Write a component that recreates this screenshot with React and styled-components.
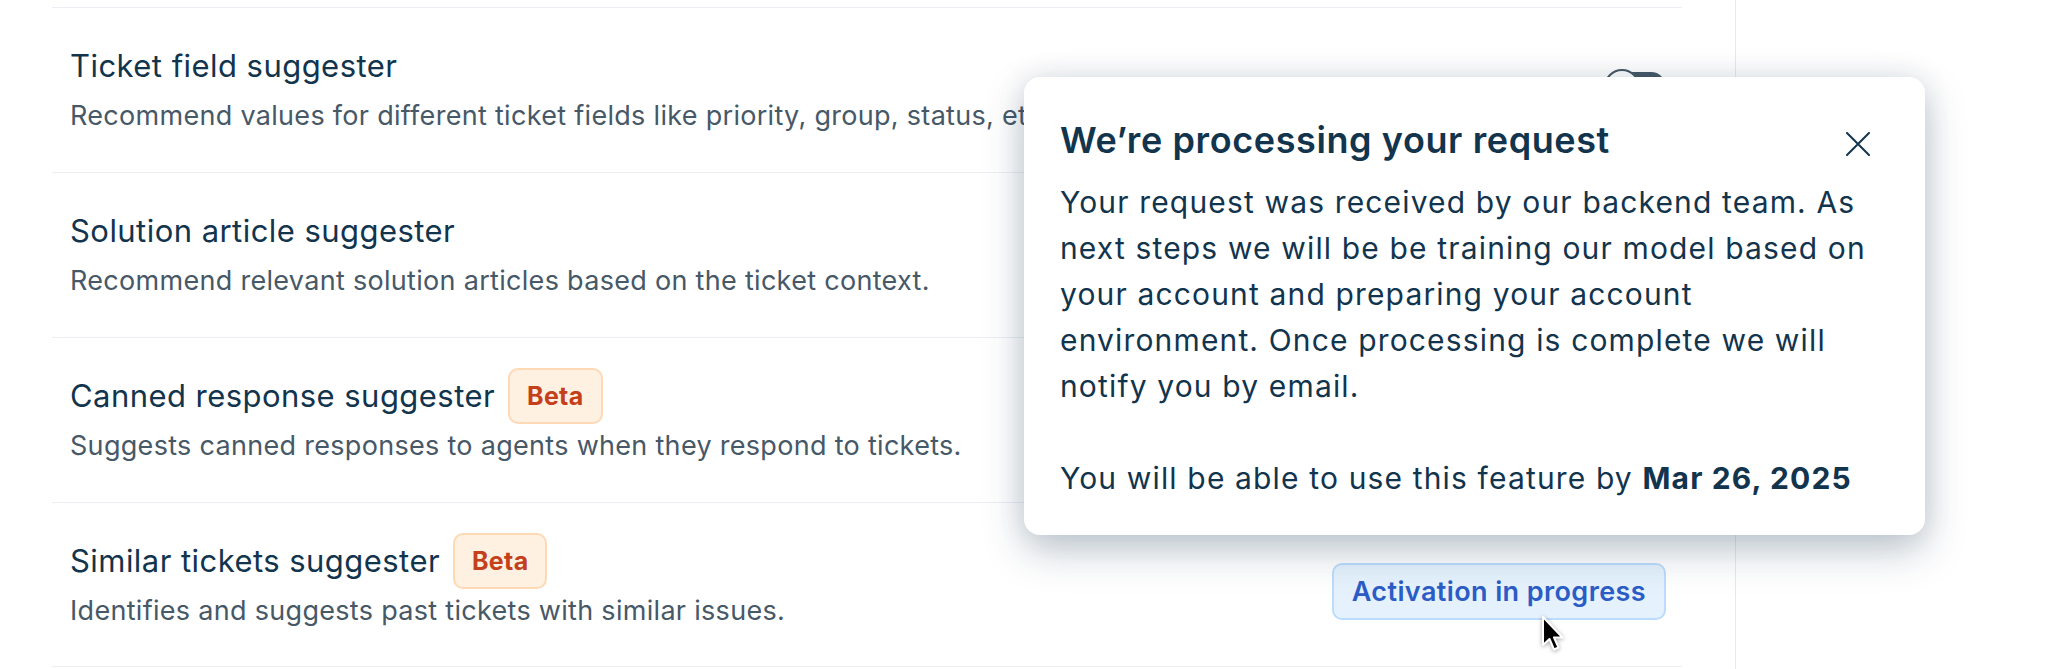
import React from "react";
import styled, { createGlobalStyle } from "styled-components";

const GlobalStyle = createGlobalStyle`
  html, body {
    margin: 0;
    padding: 0;
    background: #ffffff;
  }
  body {
    font-family: Inter, "Noto Sans", "Liberation Sans", sans-serif;
    color: #12344d;
    -webkit-font-smoothing: antialiased;
  }
  * {
    box-sizing: border-box;
  }
`;

const features = [
  {
    title: "Ticket field suggester",
    desc: "Recommend values for different ticket fields like priority, group, status, etc.",
    control: "toggle",
  },
  {
    title: "Solution article suggester",
    desc: "Recommend relevant solution articles based on the ticket context.",
    control: "toggle",
  },
  {
    title: "Canned response suggester",
    desc: "Suggests canned responses to agents when they respond to tickets.",
    beta: true,
    control: "toggle",
  },
  {
    title: "Similar tickets suggester",
    desc: "Identifies and suggests past tickets with similar issues.",
    beta: true,
    control: "progress",
  },
];

const App = () => {
  return (
    <>
      <GlobalStyle />
      <Page>
        <Main>
          <List>
            {features.map((f) => (
              <Row key={f.title}>
                <Info>
                  <TitleLine>
                    <Title>{f.title}</Title>
                    {f.beta && <Badge>Beta</Badge>}
                  </TitleLine>
                  <Desc>{f.desc}</Desc>
                </Info>
                {f.control === "toggle" ? (
                  <Toggle>
                    <Knob />
                  </Toggle>
                ) : (
                  <ProgressButton>Activation in progress</ProgressButton>
                )}
              </Row>
            ))}
          </List>
        </Main>
        <Side />

        <Popover>
          <PopoverHeader>
            <PopoverTitle>We’re processing your request</PopoverTitle>
            <CloseButton aria-label="Close">
              <svg width="24" height="24" viewBox="0 0 24 24" fill="none">
                <path
                  d="M1 1L23 23M23 1L1 23"
                  stroke="#12344d"
                  strokeWidth="2"
                  strokeLinecap="round"
                />
              </svg>
            </CloseButton>
          </PopoverHeader>
          <PopoverBody>
            Your request was received by our backend team. As next steps we
            will be be training our model based on your account and preparing
            your account environment. Once processing is complete we will
            notify you by email.
            <br />
            <br />
            You will be able to use this feature by <strong>Mar 26, 2025</strong>
          </PopoverBody>
        </Popover>

        <Cursor>
          <svg width="26" height="40" viewBox="0 0 26 40">
            <path
              d="M2 2 L2 30 L8.5 24 L13 34.5 L17.5 32.5 L13 22.5 L21.5 22.5 Z"
              fill="#000"
              stroke="#fff"
              strokeWidth="2"
              strokeLinejoin="round"
            />
          </svg>
        </Cursor>
      </Page>
    </>
  );
};

export default App;

const Page = styled.div`
  position: relative;
  display: flex;
  width: 2048px;
  height: 669px;
  overflow: hidden;
  background: #fff;
`;

const Main = styled.div`
  width: 1736px;
  padding: 7px 53px 0 52px;
  border-right: 1px solid #e6eaee;
`;

const Side = styled.div`
  flex: 1;
`;

const List = styled.div`
  display: flex;
  flex-direction: column;
`;

const Row = styled.div`
  display: flex;
  align-items: center;
  justify-content: space-between;
  height: 165px;
  padding: 0 16px 0 18px;
  border-top: 1px solid #ebeff3;

  &:last-child {
    border-bottom: 1px solid #ebeff3;
  }
`;

const Info = styled.div`
  display: flex;
  flex-direction: column;
  gap: 12px;
`;

const TitleLine = styled.div`
  display: flex;
  align-items: center;
  gap: 13px;
  height: 40px;
`;

const Title = styled.div`
  font-size: 31px;
  line-height: 40px;
  font-weight: 400;
  letter-spacing: 0.45px;
  color: #12344d;
  white-space: nowrap;
`;

const Badge = styled.span`
  display: inline-flex;
  align-items: center;
  justify-content: center;
  height: 56px;
  padding: 0 17px;
  border: 2px solid #fdd9b5;
  border-radius: 10px;
  background: #fef1e1;
  color: #c4401b;
  font-size: 25px;
  font-weight: 700;
  letter-spacing: 0.3px;
`;

const Desc = styled.div`
  font-size: 27px;
  line-height: 36px;
  letter-spacing: 0.3px;
  color: #475867;
  white-space: nowrap;
`;

const Toggle = styled.div`
  position: relative;
  width: 62px;
  height: 30px;
  margin-top: -6px;
  border-radius: 15px;
  background: #475867;
`;

const Knob = styled.div`
  position: absolute;
  left: 0;
  top: -3px;
  width: 36px;
  height: 36px;
  border-radius: 50%;
  background: #fff;
  border: 2px solid #475867;
`;

const ProgressButton = styled.button`
  height: 57px;
  margin-top: 14px;
  padding: 0 18px;
  border: 2px solid #bbdcfd;
  border-radius: 10px;
  background: #e5f2fd;
  color: #2c5cc5;
  font-family: inherit;
  font-size: 27px;
  font-weight: 600;
  letter-spacing: 0.4px;
  white-space: nowrap;
  cursor: pointer;
`;

const Popover = styled.div`
  position: absolute;
  left: 1024px;
  top: 77px;
  width: 901px;
  padding: 41px 36px 34px;
  border-radius: 16px;
  background: #fff;
  box-shadow: 0 16px 40px rgba(18, 52, 77, 0.26),
    0 0 28px rgba(18, 52, 77, 0.1);
`;

const PopoverHeader = styled.div`
  display: flex;
  align-items: flex-start;
  justify-content: space-between;
`;

const PopoverTitle = styled.div`
  font-size: 36px;
  line-height: 44px;
  font-weight: 600;
  letter-spacing: 0.6px;
  color: #12344d;
`;

const CloseButton = styled.button`
  display: flex;
  padding: 0;
  margin: 14px 19px 0 0;
  border: none;
  background: none;
  cursor: pointer;
`;

const PopoverBody = styled.div`
  margin-top: 17px;
  font-size: 30px;
  line-height: 46px;
  letter-spacing: 1.15px;
  color: #12344d;

  strong {
    font-weight: 700;
  }
`;

const Cursor = styled.div`
  position: absolute;
  left: 1541px;
  top: 615px;
  filter: drop-shadow(0 1px 2px rgba(0, 0, 0, 0.35));
  pointer-events: none;
`;
